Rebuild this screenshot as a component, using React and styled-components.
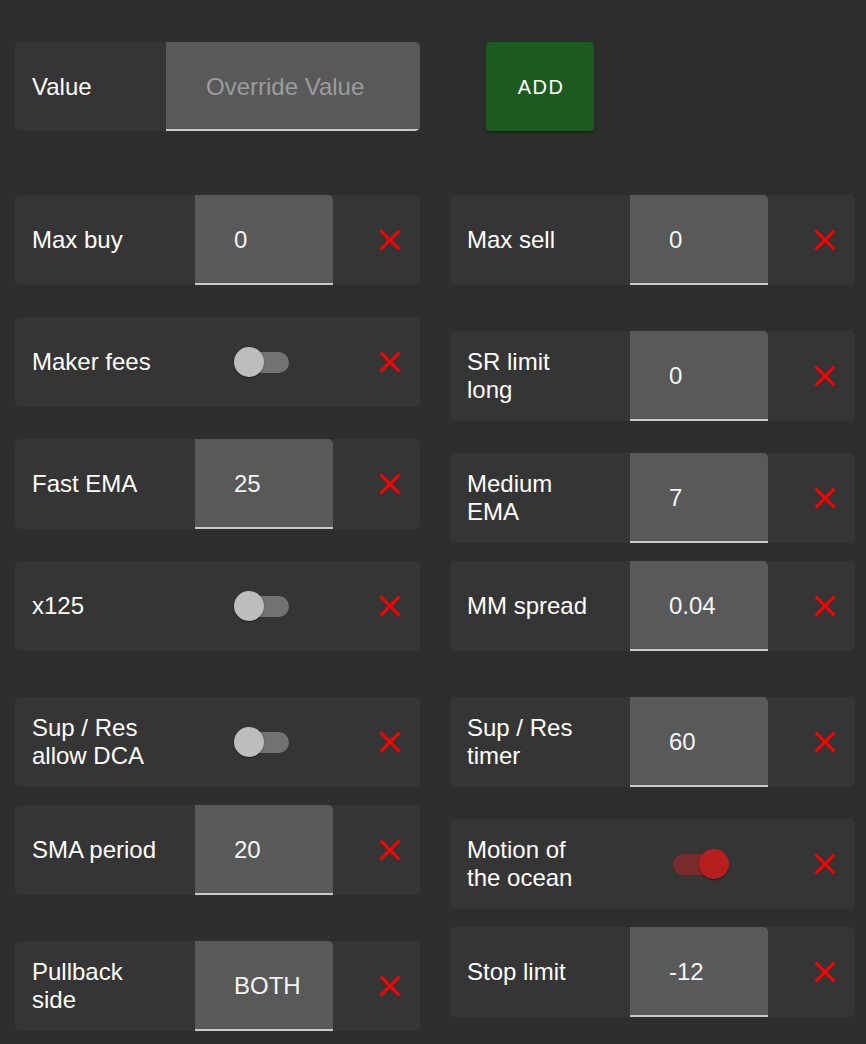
import styled, { createGlobalStyle } from "styled-components";

const GlobalStyle = createGlobalStyle`
  html, body {
    margin: 0;
    padding: 0;
    background-color: #2e2e2e;
  }
  body {
    font-family: "Liberation Sans", Arial, sans-serif;
    color: #ffffff;
  }
`;

const rows = [
  {
    space: 64,
    items: [
      { label: "Max buy", value: "0" },
      { label: "Max sell", value: "0" },
    ],
  },
  {
    space: 32,
    items: [
      { label: "Maker fees", toggle: true, on: false },
      { label: "SR limit long", value: "0" },
    ],
  },
  {
    space: 18,
    items: [
      { label: "Fast EMA", value: "25" },
      { label: "Medium EMA", value: "7" },
    ],
  },
  {
    space: 18,
    items: [
      { label: "x125", toggle: true, on: false },
      { label: "MM spread", value: "0.04" },
    ],
  },
  {
    space: 46,
    items: [
      { label: "Sup / Res allow DCA", toggle: true, on: false },
      { label: "Sup / Res timer", value: "60" },
    ],
  },
  {
    space: 18,
    items: [
      { label: "SMA period", value: "20" },
      { label: "Motion of the ocean", toggle: true, on: true },
    ],
  },
  {
    space: 18,
    items: [
      { label: "Pullback side", value: "BOTH" },
      { label: "Stop limit", value: "-12" },
    ],
  },
];

const CloseIcon = () => (
  <svg width="36" height="36" viewBox="0 0 24 24" fill="#ff0000">
    <path d="M19 6.41 17.59 5 12 10.59 6.41 5 5 6.41 10.59 12 5 17.59 6.41 19 12 13.41 17.59 19 19 17.59 13.41 12z" />
  </svg>
);

const SettingCard = ({ label, value, toggle, on }) => (
  <Card>
    <Label>{label}</Label>
    {toggle ? (
      <ToggleCell>
        <Track $on={on}>
          <Knob $on={on} />
        </Track>
      </ToggleCell>
    ) : (
      <ValueCell>{value}</ValueCell>
    )}
    <RemoveCell>
      <CloseIcon />
    </RemoveCell>
  </Card>
);

const App = () => {
  return (
    <>
      <GlobalStyle />
      <Page>
        <TopBar>
          <OverrideCard>
            <OverrideLabel>Value</OverrideLabel>
            <OverrideInput>Override Value</OverrideInput>
          </OverrideCard>
          <AddButton>ADD</AddButton>
        </TopBar>
        {rows.map((row, i) => (
          <Row key={i} $space={row.space}>
            {row.items.map((item) => (
              <SettingCard key={item.label} {...item} />
            ))}
          </Row>
        ))}
      </Page>
    </>
  );
};

const Page = styled.div`
  padding: 42px 11px 20px 15px;
  display: flex;
  flex-direction: column;
`;

const TopBar = styled.div`
  display: flex;
  align-items: stretch;
  gap: 66px;
  height: 89px;
`;

const OverrideCard = styled.div`
  width: 405px;
  display: flex;
  background-color: #353535;
  border-radius: 5px;
  overflow: hidden;
`;

const OverrideLabel = styled.div`
  width: 151px;
  box-sizing: border-box;
  padding-left: 17px;
  display: flex;
  align-items: center;
  font-size: 24px;
`;

const OverrideInput = styled.div`
  flex: 1;
  box-sizing: border-box;
  padding: 2px 0 0 40px;
  display: flex;
  align-items: center;
  background-color: #595959;
  border-radius: 0 5px 0 0;
  border-bottom: 2px solid #c9c9c9;
  color: #9c9c9c;
  font-size: 24px;
`;

const AddButton = styled.button`
  width: 108px;
  border: none;
  border-radius: 4px;
  background-color: #1c5b20;
  color: #ffffff;
  font-family: "Liberation Sans", Arial, sans-serif;
  font-size: 20px;
  letter-spacing: 1.5px;
  padding: 2px 0 0 2px;
  box-shadow: 0 3px 1px -2px rgba(0, 0, 0, 0.2), 0 2px 2px 0 rgba(0, 0, 0, 0.14),
    0 1px 5px 0 rgba(0, 0, 0, 0.12);
  cursor: pointer;
`;

const Row = styled.div`
  display: flex;
  align-items: baseline;
  gap: 30px;
  margin-top: ${(p) => p.$space}px;
`;

const Card = styled.div`
  width: 405px;
  height: 90px;
  display: flex;
  align-items: center;
  background-color: #353535;
  border-radius: 5px;
  overflow: hidden;
`;

const Label = styled.div`
  width: 180px;
  box-sizing: border-box;
  padding: 0 32px 0 17px;
  font-size: 24px;
  line-height: 28px;
`;

const ValueCell = styled.div`
  width: 138px;
  height: 100%;
  box-sizing: border-box;
  padding: 2px 0 0 39px;
  display: flex;
  align-items: center;
  background-color: #595959;
  border-radius: 0 5px 0 0;
  border-bottom: 2px solid #c9c9c9;
  font-size: 24px;
  color: #f4f4f4;
`;

const ToggleCell = styled.div`
  width: 138px;
  box-sizing: border-box;
  padding-left: 43px;
  display: flex;
  align-items: center;
`;

const Track = styled.div`
  position: relative;
  width: 51px;
  height: 21px;
  border-radius: 11px;
  background-color: ${(p) => (p.$on ? "#7a2b2b" : "#727272")};
`;

const Knob = styled.div`
  position: absolute;
  top: -4.5px;
  ${(p) => (p.$on ? "right: -4.5px;" : "left: -4.5px;")}
  width: 30px;
  height: 30px;
  border-radius: 50%;
  background-color: ${(p) => (p.$on ? "#b71e1e" : "#bdbdbd")};
  box-shadow: 0 2px 1px -1px rgba(0, 0, 0, 0.2), 0 1px 1px 0 rgba(0, 0, 0, 0.14),
    0 1px 3px 0 rgba(0, 0, 0, 0.12);
`;

const RemoveCell = styled.div`
  flex: 1;
  display: flex;
  align-items: center;
  justify-content: flex-end;
  padding-right: 12px;
`;

export default App;
